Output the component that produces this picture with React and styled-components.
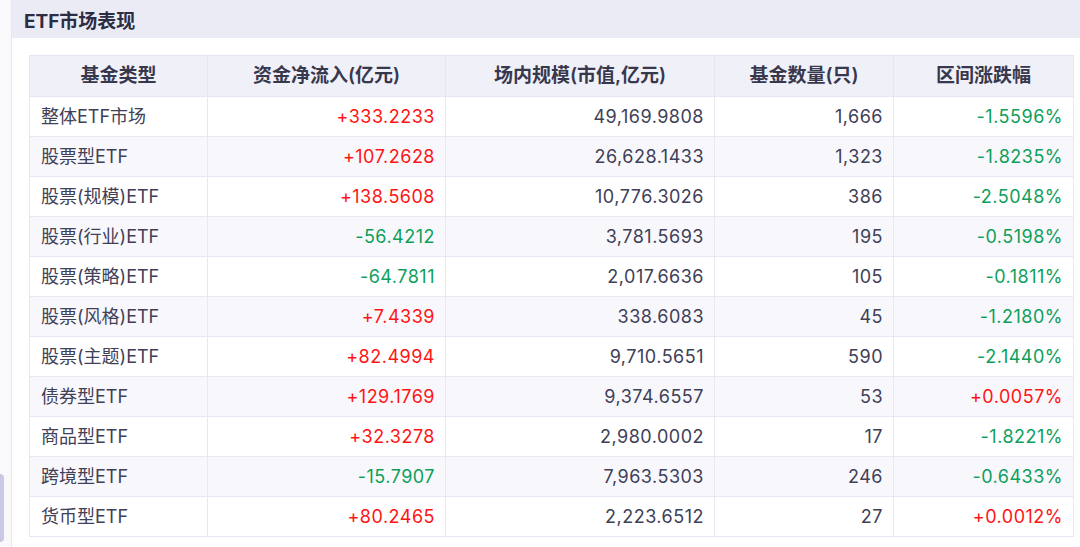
import React from 'react';
import styled, { createGlobalStyle } from 'styled-components';

const GlobalStyle = createGlobalStyle`
  html, body {
    margin: 0;
    padding: 0;
    background: #f9f9fb;
    font-family: Inter, "Noto Sans CJK SC", sans-serif;
  }
`

const rows = [
  ['整体ETF市场', '+333.2233', '49,169.9808', '1,666', '-1.5596%'],
  ['股票型ETF', '+107.2628', '26,628.1433', '1,323', '-1.8235%'],
  ['股票(规模)ETF', '+138.5608', '10,776.3026', '386', '-2.5048%'],
  ['股票(行业)ETF', '-56.4212', '3,781.5693', '195', '-0.5198%'],
  ['股票(策略)ETF', '-64.7811', '2,017.6636', '105', '-0.1811%'],
  ['股票(风格)ETF', '+7.4339', '338.6083', '45', '-1.2180%'],
  ['股票(主题)ETF', '+82.4994', '9,710.5651', '590', '-2.1440%'],
  ['债券型ETF', '+129.1769', '9,374.6557', '53', '+0.0057%'],
  ['商品型ETF', '+32.3278', '2,980.0002', '17', '-1.8221%'],
  ['跨境型ETF', '-15.7907', '7,963.5303', '246', '-0.6433%'],
  ['货币型ETF', '+80.2465', '2,223.6512', '27', '+0.0012%'],
];

const headers = ['基金类型', '资金净流入(亿元)', '场内规模(市值,亿元)', '基金数量(只)', '区间涨跌幅'];
const widths = [178, 238, 269, 179, 180];

const Page = styled.div`
  position: relative;
  height: 547px;
  overflow: hidden;
  padding-left: 11px;
`

const Card = styled.section`
  background: #fff;
  border-left: 1px solid #e6e6f1;
  height: 100%;
`

const TitleBar = styled.div`
  height: 38px;
  background: #ebebf6;
  display: flex;
  align-items: center;
  padding-left: 12px;
  font-size: 19px;
  font-weight: 700;
  color: #2c2c42;
`

const Body = styled.div`
  padding: 17px 6px 0 17px;
`

const Table = styled.table`
  border-collapse: collapse;
  table-layout: fixed;
  width: 1045px;
  font-size: 18px;
  line-height: 22px;
`

const Th = styled.th`
  padding: 9px 0 9px;
  background: #f0f0f9;
  border: 1px solid #e6e6f2;
  color: #38384d;
  font-size: 19px;
  font-weight: 600;
  text-align: center;
`

const Tr = styled.tr`
  background: ${p => p.$alt ? '#f8f8fc' : '#fff'};
`

const Td = styled.td`
  padding: 9px 10px 8px 11px;
  border: 1px solid #e8e8f2;
  text-align: ${p => p.$left ? 'left' : 'right'};
  letter-spacing: ${p => p.$left ? '0' : '0.5px'};
  color: ${p => p.$tone === 'up' ? '#ff1414' : p.$tone === 'down' ? '#0e9f5b' : '#404057'};
  white-space: nowrap;
`

const SideTab = styled.div`
  position: absolute;
  left: 0;
  top: 474px;
  width: 4px;
  height: 68px;
  background: #c9c9e6;
  border-radius: 0 4px 4px 0;
`

const tone = v => (v.startsWith('+') ? 'up' : v.startsWith('-') ? 'down' : undefined);

export default function App() {
  return (
    <>
      <GlobalStyle />
      <Page>
        <Card>
          <TitleBar>ETF市场表现</TitleBar>
          <Body>
            <Table>
              <colgroup>
                {widths.map((w, i) => <col key={i} style={{ width: w }} />)}
              </colgroup>
              <thead>
                <tr>
                  {headers.map(h => <Th key={h}>{h}</Th>)}
                </tr>
              </thead>
              <tbody>
                {rows.map((r, i) => (
                  <Tr key={r[0]} $alt={i % 2 === 1}>
                    <Td $left>{r[0]}</Td>
                    <Td $tone={tone(r[1])}>{r[1]}</Td>
                    <Td>{r[2]}</Td>
                    <Td>{r[3]}</Td>
                    <Td $tone={tone(r[4])}>{r[4]}</Td>
                  </Tr>
                ))}
              </tbody>
            </Table>
          </Body>
        </Card>
        <SideTab />
      </Page>
    </>
  );
}
